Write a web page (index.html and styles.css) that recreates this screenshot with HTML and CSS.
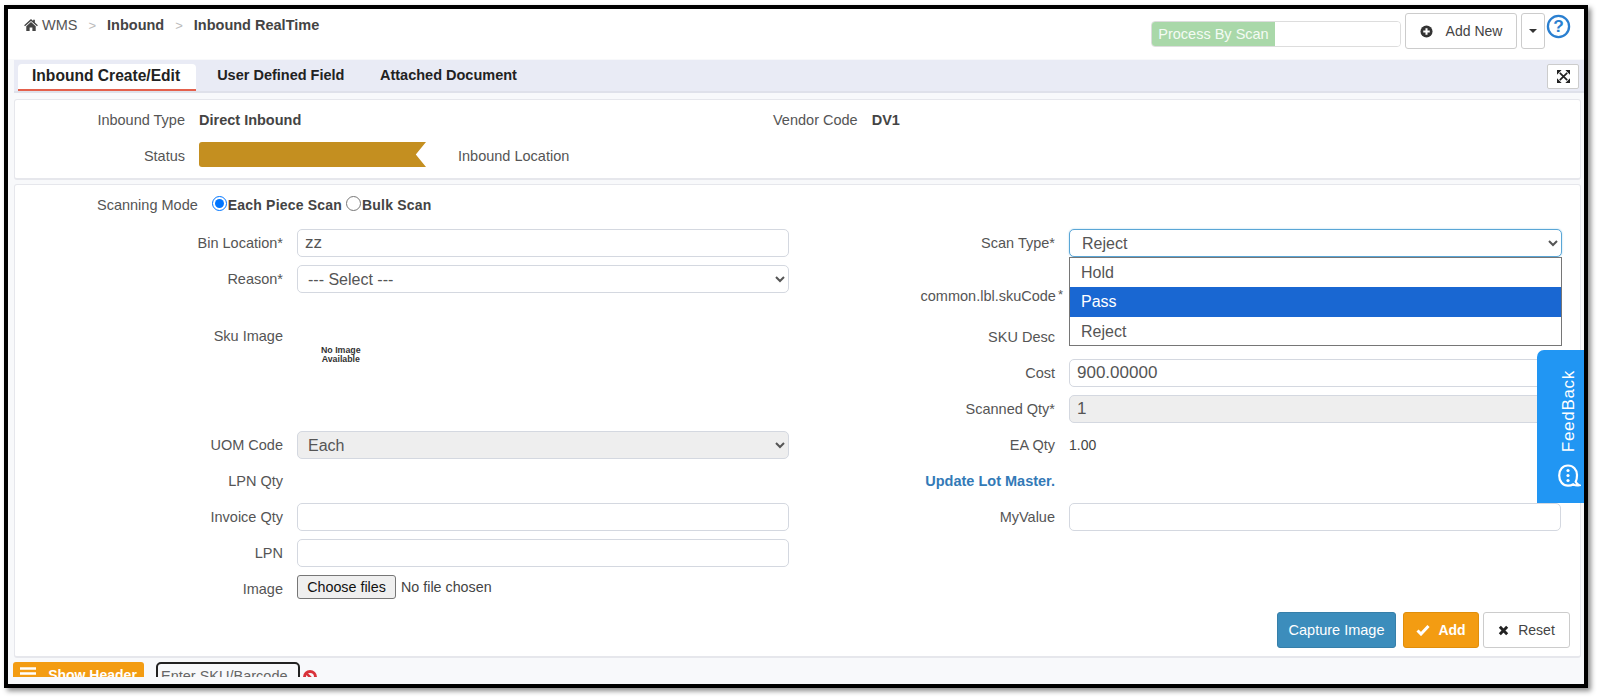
FILE: index.html
```html
<!DOCTYPE html>
<html>
<head>
<meta charset="utf-8">
<title>Inbound RealTime</title>
<link rel="stylesheet" href="styles.css">
</head>
<body>
<div class="frame">
  <header class="topbar">
    <nav class="crumbs">
      <svg class="home" viewBox="0 0 16 14" width="14" height="12"><path fill="#444" d="M8 0 L10.5 2.3 V1 H12.5 V4.1 L16 7.3 L15 8.4 L8 2.2 L1 8.4 L0 7.3 Z M8 3.6 L13.5 8.5 V14 H9.6 V10 H6.4 V14 H2.5 V8.5 Z"/></svg>
      <span class="crumb-root">WMS</span><span class="sep">&gt;</span><b>Inbound</b><span class="sep">&gt;</span><b>Inbound RealTime</b>
    </nav>
    <div class="actions">
      <div class="scan"><span class="scan-label">Process By Scan</span><input class="scan-input" type="text"></div>
      <button class="btn add-new"><svg viewBox="0 0 14 14" width="13" height="13"><circle cx="7" cy="7" r="6.5" fill="#333"/><path d="M7 3.5v7M3.5 7h7" stroke="#fff" stroke-width="2.2"/></svg><span>Add New</span></button>
      <button class="btn caret-btn"><i class="caret"></i></button>
      <svg class="help" viewBox="0 0 26 26" width="25" height="25"><circle cx="13" cy="13" r="11" fill="#fff" stroke="#2a7fd0" stroke-width="2.4"/><text x="13" y="19" text-anchor="middle" class="help-q">?</text></svg>
    </div>
  </header>

  <div class="tabs">
    <span class="tab active">Inbound Create/Edit</span>
    <span class="tab">User Defined Field</span>
    <span class="tab">Attached Document</span>
    <button class="expand"><svg viewBox="0 0 14 14" width="13" height="13"><path d="M3 3 11 11M11 3 3 11" stroke="#222" stroke-width="1.800"/><path fill="#222" d="M0 0h5L0 5zM14 0v5L9 0zM0 14V9l5 5zM14 14H9l5-5z"/></svg></button>
  </div>

  <section class="card summary">
    <div class="sum-row">
      <span class="sum-label">Inbound Type</span><b class="sum-value">Direct Inbound</b>
      <span class="sum-label vendor">Vendor Code</span><b class="sum-value">DV1</b>
    </div>
    <div class="sum-row">
      <span class="sum-label">Status</span><span class="banner"></span>
      <span class="loc">Inbound Location</span>
    </div>
  </section>

  <section class="card form">
    <div class="mode">
      <span class="mode-label">Scanning Mode</span>
      <label class="radio"><input type="radio" name="m" checked>Each Piece Scan</label>
      <label class="radio"><input type="radio" name="m">Bulk Scan</label>
    </div>
    <div class="cols">
      <div class="col">
        <div class="row"><label>Bin Location*</label><input class="ctl" type="text" value="zz"></div>
        <div class="row"><label>Reason*</label><select class="ctl"><option>--- Select ---</option></select></div>
        <div class="row row-img"><label>Sku Image</label><div class="noimg">No Image<br>Available</div></div>
        <div class="row"><label>UOM Code</label><select class="ctl off" disabled><option>Each</option></select></div>
        <div class="row"><label>LPN Qty</label></div>
        <div class="row"><label>Invoice Qty</label><input class="ctl" type="text"></div>
        <div class="row"><label>LPN</label><input class="ctl" type="text"></div>
        <div class="row"><label>Image</label><span class="file"><button class="file-btn">Choose files</button>No file chosen</span></div>
      </div>
      <div class="col">
        <div class="row"><label>Scan Type*</label><select class="ctl focus"><option>Reject</option></select></div>
        <div class="row row-sku"><label>common.lbl.skuCode<sup>*</sup></label></div>
        <div class="row"><label>SKU Desc</label></div>
        <div class="row"><label>Cost</label><input class="ctl" type="text" value="900.00000"></div>
        <div class="row"><label>Scanned Qty*</label><input class="ctl off" type="text" value="1" disabled></div>
        <div class="row"><label>EA Qty</label><span class="plain">1.00</span></div>
        <div class="row"><label class="link">Update Lot Master.</label></div>
        <div class="row"><label>MyValue</label><input class="ctl" type="text"></div>
      </div>
    </div>
    <div class="buttons">
      <button class="btn capture">Capture Image</button>
      <button class="btn ok"><svg viewBox="0 0 14 12" width="14" height="12"><path d="M1.500 6.500 5 10 12.500 2" fill="none" stroke="#fff" stroke-width="3"/></svg>Add</button>
      <button class="btn reset"><svg viewBox="0 0 12 12" width="11" height="11"><path d="M2 2 10 10M10 2 2 10" stroke="#222" stroke-width="3.200"/></svg>Reset</button>
    </div>
  </section>

  <div class="footer">
    <button class="show-header"><svg viewBox="0 0 16 13" width="16" height="13"><path d="M0 1.500h16M0 6.500h16M0 11.500h16" stroke="#fff" stroke-width="2.400"/></svg>Show Header</button>
    <span class="sku-box">Enter SKU/Barcode</span>
    <svg class="no" viewBox="0 0 14 14" width="14" height="14"><circle cx="7" cy="7" r="5.500" fill="none" stroke="#d9323a" stroke-width="3"/><path d="M3 3l8 8" stroke="#d9323a" stroke-width="2.500"/></svg>
  </div>

  <div class="menu">
    <div class="opt">Hold</div>
    <div class="opt sel">Pass</div>
    <div class="opt">Reject</div>
  </div>

  <div class="feedback">
    <span class="fb-text">FeedBack</span>
    <svg viewBox="0 0 24 25" width="24" height="25"><path d="M11 2.500c5.200 0 9 4 9 9.500 0 2.700-.4 5-1.300 6.800.7 1.600 2.100 2.800 3.600 3.400-2.200.6-4.300.2-6-.9-1.600 1-3.400 1.400-5.300 1.400-5.200 0-8.800-4.300-8.800-10.300S5.800 2.500 11 2.500z" fill="none" stroke="#fff" stroke-width="2.200"/><circle cx="11" cy="7.500" r="1.600" fill="#fff"/><circle cx="11" cy="12.500" r="1.600" fill="#fff"/><circle cx="11" cy="17.500" r="1.600" fill="#fff"/></svg>
  </div>
</div>
</body>
</html>
```
FILE: styles.css
```css
* { box-sizing: border-box; }
html, body { margin: 0; padding: 0; height: 699px; overflow: hidden; background: #fff; }
body { padding: 5px 0 0 4px; font-family: "Liberation Sans", Arial, sans-serif; font-size: 14.500px; color: #555; }

.frame {
  position: relative;
  width: 1584px;
  height: 683px;
  border: 4px solid #000;
  box-shadow: 3px 3px 5px rgba(0,0,0,.45);
  background: #f8f9fb;
  overflow: hidden;
  display: flex;
  flex-direction: column;
}

.topbar {
  height: 50px;
  flex: none;
  padding: 0 13px 0 16px;
  background: #fff;
  display: flex;
  justify-content: space-between;
}
.crumbs { display: flex; align-items: center; height: 32px; color: #555; }
.crumbs b { color: #444; }
.home { margin-right: 4px; }
.sep { color: #bbb; margin: 0 11px; font-size: 13px; }

.actions { display: flex; align-items: flex-start; padding-top: 4px; }
.scan {
  margin-top: 8px;
  width: 250px;
  height: 26px;
  display: flex;
  border: 1px solid #ddd;
  border-radius: 4px;
  overflow: hidden;
  background: #fff;
  margin-right: 4px;
}
.scan-label { width: 123px; background: #a9d8a9; color: #f4fbf4; text-align: center; line-height: 24px; font-size: 14.500px; }
.scan-input { flex: 1; border: 0; min-width: 0; }

.btn {
  font: inherit;
  color: #444;
  background: #fff;
  border: 1px solid #ccc;
  border-radius: 3px;
  display: inline-flex;
  align-items: center;
  justify-content: center;
  padding: 0;
}
.add-new { width: 112px; height: 36px; gap: 13px; margin-right: 4px; font-size: 14px; }
.caret-btn { width: 24px; height: 36px; }
.caret { border: 4px solid transparent; border-top-color: #333; border-bottom: 0; }
.help { margin: 1px 0 0 1px; }
.help-q { font: 700 18px "Liberation Sans", Arial, sans-serif; fill: #2a7fd0; }

.tabs {
  flex: none;
  height: 33px;
  margin: 1px 0 0 6px;
  padding: 4px 0 0 4px;
  background: #e9ebf5;
  border-bottom: 2px solid #dfe1ea;
  display: flex;
  align-items: flex-start;
  font-weight: 700;
  color: #222;
}
.tab { padding: 0 17.500px 0 18px; height: 27px; line-height: 22px; font-size: 14.500px; }
.tab.active {
  background: #fff;
  border-radius: 4px 4px 0 0;
  border-bottom: 2px solid #e4604c;
  padding: 0 16px 0 14px;
  font-size: 15.600px;
  line-height: 24px;
  margin-right: 3px;
}
.expand {
  margin-left: auto;
  margin-right: 5px;
  width: 32px;
  height: 25px;
  background: #fff;
  border: 1px solid #ccc;
  border-radius: 2px;
  display: flex;
  align-items: center;
  justify-content: center;
  padding: 0;
}

.card {
  background: #fff;
  margin: 0 3px 0 6px;
  border: 1px solid #e6e7ec;
  border-bottom-width: 2px;
  border-radius: 3px;
}
.summary { height: 81px; margin-top: 6px; padding-top: 2px; }
.sum-row { display: flex; align-items: center; height: 36px; }
.sum-label { width: 170px; text-align: right; margin-right: 14px; }
.sum-label.vendor { width: auto; margin-left: 388px; }
.sum-value { color: #444; }
.sum-value:first-of-type { width: 186px; }
.banner {
  width: 227px;
  height: 25px;
  margin-top: -3px;
  background: #c48f20;
  border-radius: 3px 0 0 3px;
  clip-path: polygon(0 0, 100% 0, 95.500% 50%, 100% 100%, 0 100%);
}
.loc { margin-left: 32px; }

.form { height: 474px; margin-top: 4px; }
.mode { display: flex; align-items: center; height: 36px; padding: 3px 0 0 82px; }
.mode-label { margin-right: 14px; }
.radio { display: inline-flex; align-items: center; font-weight: 700; font-size: 14px; color: #444; letter-spacing: .2px; }
.radio + .radio { margin-left: 4px; }
.radio input { margin: 0 1px 2px 0; width: 15px; height: 15px; }

.cols { display: grid; grid-template-columns: 775px 1fr; margin-top: 4px; }
.col { display: flex; flex-direction: column; }
.row { display: flex; align-items: center; height: 36px; flex: none; }
.row label { width: 282px; text-align: right; padding-right: 14px; flex: none; }
.col + .col .row label { width: 279px; }
.row-img { height: 130px; align-items: flex-start; padding-top: 31px; }
.row-sku { height: 58px; padding-top: 11px; }
.row-sku sup { font-size: 13px; line-height: 0; vertical-align: baseline; position: relative; top: -2px; margin: 0 -8px 0 2px; }

.ctl {
  width: 492px;
  height: 28px;
  border: 1px solid #d4d8e0;
  border-radius: 5px;
  background: #fff;
  padding: 0 7px;
  font: 17px "Liberation Sans", Arial, sans-serif;
  color: #555;
}
select.ctl { padding-left: 6px; font-size: 16px; }
select.ctl.focus { width: 493px; padding-left: 8px; border-color: #5aa6d6; box-shadow: 0 0 2px #a9d3ec; }
.ctl.off { background-color: #eee; opacity: 1; color: #555; }
.noimg { margin: 18px 0 0 24px; font-size: 8.800px; line-height: 9px; font-weight: 700; text-align: center; color: #333; }
.file { display: inline-flex; align-items: center; gap: 5px; color: #444; margin-top: -4px; font-size: 14.300px; }
.file-btn {
  font: inherit;
  color: #111;
  background: #efefef;
  border: 1px solid #767676;
  border-radius: 3px;
  height: 24px;
  width: 99px;
  padding: 0;
}
.plain { color: #444; font-size: 14px; }
.link { color: #337ab7; font-weight: 700; }

.buttons { display: flex; justify-content: flex-end; gap: 4px; padding-right: 10px; margin-top: 5px; }
.buttons .btn { height: 36px; }
.capture { width: 119px; background: #3c8dbc; border-color: #367fa9; color: #fff; margin-right: 3px; }
.ok { width: 76px; gap: 8px; background: #f39c12; border-color: #e08e0b; color: #fff; font-weight: 700; font-size: 14px; }
.reset { width: 87px; gap: 9px; color: #444; font-size: 14px; }

.footer { flex: none; display: flex; align-items: flex-start; height: 15px; margin-top: 4px; padding-left: 5px; overflow: hidden; }
.show-header {
  width: 131px;
  height: 30px;
  background: #f39c12;
  border: 0;
  border-radius: 3px;
  color: #fff;
  font: 700 14px "Liberation Sans", Arial, sans-serif;
  display: flex;
  align-items: flex-start;
  justify-content: center;
  gap: 12px;
  padding-top: 5px;
}
.sku-box {
  margin-left: 12px;
  width: 144px;
  height: 30px;
  border: 2px solid #222;
  border-radius: 5px;
  padding: 4px 3px;
  color: #666;
}
.no { margin: 8px 0 0 3px; }

.menu {
  position: absolute;
  left: 1061px;
  top: 248px;
  width: 493px;
  height: 89px;
  background: #fff;
  border: 1px solid #767676;
  font-size: 16px;
  color: #555;
}
.opt { height: 29.300px; line-height: 30px; padding-left: 11px; }
.opt.sel { background: #1967d2; color: #fff; }

.feedback {
  position: absolute;
  right: -1px;
  top: 341px;
  width: 48px;
  height: 153px;
  background: #2196f3;
  border-radius: 7px 0 0 0;
  display: flex;
  flex-direction: column;
  align-items: center;
  justify-content: flex-end;
  padding: 0 0 15px 15px;
  gap: 11px;
  color: #fff;
}
.fb-text { writing-mode: vertical-rl; transform: rotate(180deg); font-size: 17px; letter-spacing: .7px; }
```
